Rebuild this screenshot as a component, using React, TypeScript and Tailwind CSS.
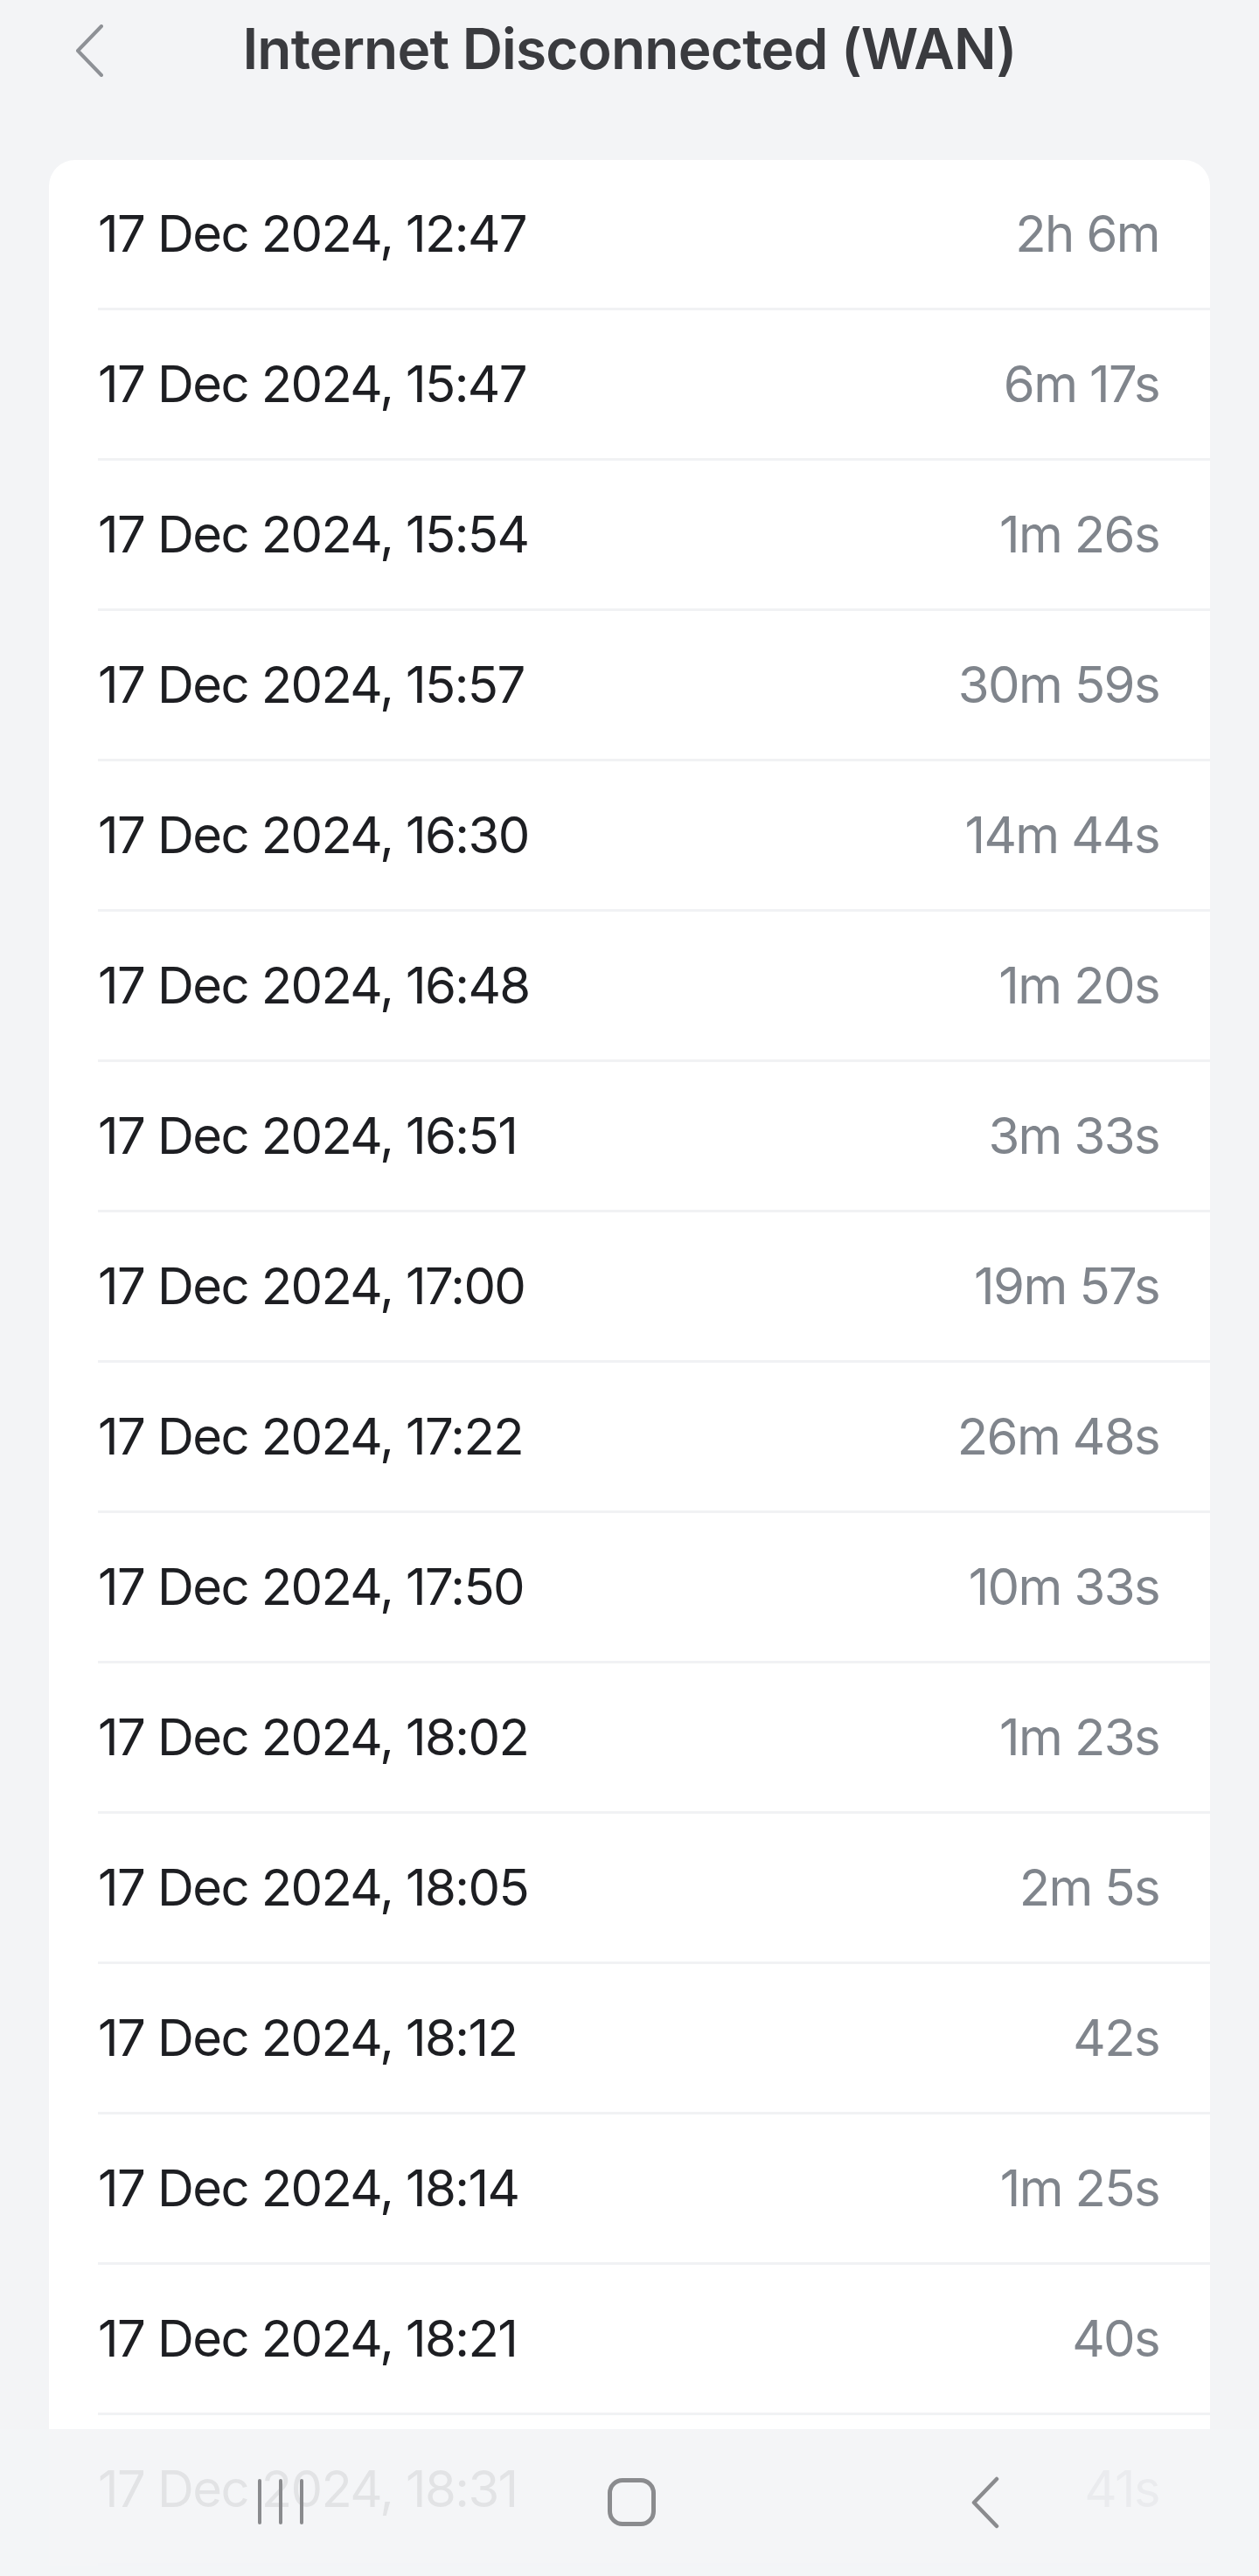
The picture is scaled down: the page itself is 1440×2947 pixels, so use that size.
import React from "react";

const rows: [string, string][] = [
  ["17 Dec 2024, 12:47", "2h 6m"],
  ["17 Dec 2024, 15:47", "6m 17s"],
  ["17 Dec 2024, 15:54", "1m 26s"],
  ["17 Dec 2024, 15:57", "30m 59s"],
  ["17 Dec 2024, 16:30", "14m 44s"],
  ["17 Dec 2024, 16:48", "1m 20s"],
  ["17 Dec 2024, 16:51", "3m 33s"],
  ["17 Dec 2024, 17:00", "19m 57s"],
  ["17 Dec 2024, 17:22", "26m 48s"],
  ["17 Dec 2024, 17:50", "10m 33s"],
  ["17 Dec 2024, 18:02", "1m 23s"],
  ["17 Dec 2024, 18:05", "2m 5s"],
  ["17 Dec 2024, 18:12", "42s"],
  ["17 Dec 2024, 18:14", "1m 25s"],
  ["17 Dec 2024, 18:21", "40s"],
  ["17 Dec 2024, 18:31", "41s"],
];

export default function App() {
  return (
    <div
      className="relative h-[2947px] w-full overflow-hidden bg-[#f3f4f6]"
      style={{ fontFamily: "Inter, 'Noto Sans', sans-serif" }}
    >
      <header className="relative flex h-[112px] items-center justify-center">
        <svg
          className="absolute left-[84px] top-[28px]"
          width="36"
          height="60"
          viewBox="0 0 36 60"
          fill="none"
        >
          <path d="M32 2 L5 30 L32 58" stroke="#8e9196" strokeWidth="4" strokeLinecap="round" strokeLinejoin="round" />
        </svg>
        <h1 className="text-[64px] font-semibold tracking-[-0.8px] text-[#3a3b3f]">
          Internet Disconnected (WAN)
        </h1>
      </header>

      <div className="mx-[56px] mt-[71px] rounded-t-[30px] bg-white">
        {rows.map(([d, v]) => (
          <div key={d} className="ml-[56px] border-b-[3px] border-[#f1f2f4]">
            <div className="flex h-[169px] items-center justify-between pr-[58px]">
              <span className="text-[58px] tracking-[-1.6px] text-[#1d1e22]">{d}</span>
              <span className="text-[58px] tracking-[-1.6px] text-[#80858c]">{v}</span>
            </div>
          </div>
        ))}
      </div>

      <div className="absolute bottom-0 left-0 right-0 flex h-[168px] items-center bg-[#f3f4f6]/[0.92]">
        <div className="absolute left-[295px] top-[57px] flex gap-[20px]">
          <div className="h-[52px] w-[4px] rounded-full bg-[#8a8b8e]" />
          <div className="h-[52px] w-[4px] rounded-full bg-[#8a8b8e]" />
          <div className="h-[52px] w-[4px] rounded-full bg-[#8a8b8e]" />
        </div>
        <div className="absolute left-[695px] top-[56px] h-[55px] w-[55px] rounded-[17px] border-[5px] border-[#8a8b8e]" />
        <svg
          className="absolute left-[1108px] top-[54px]"
          width="36"
          height="60"
          viewBox="0 0 36 60"
          fill="none"
        >
          <path d="M32 3 L6 30 L32 57" stroke="#8a8b8e" strokeWidth="4.5" strokeLinecap="round" strokeLinejoin="round" />
        </svg>
      </div>
    </div>
  );
}
